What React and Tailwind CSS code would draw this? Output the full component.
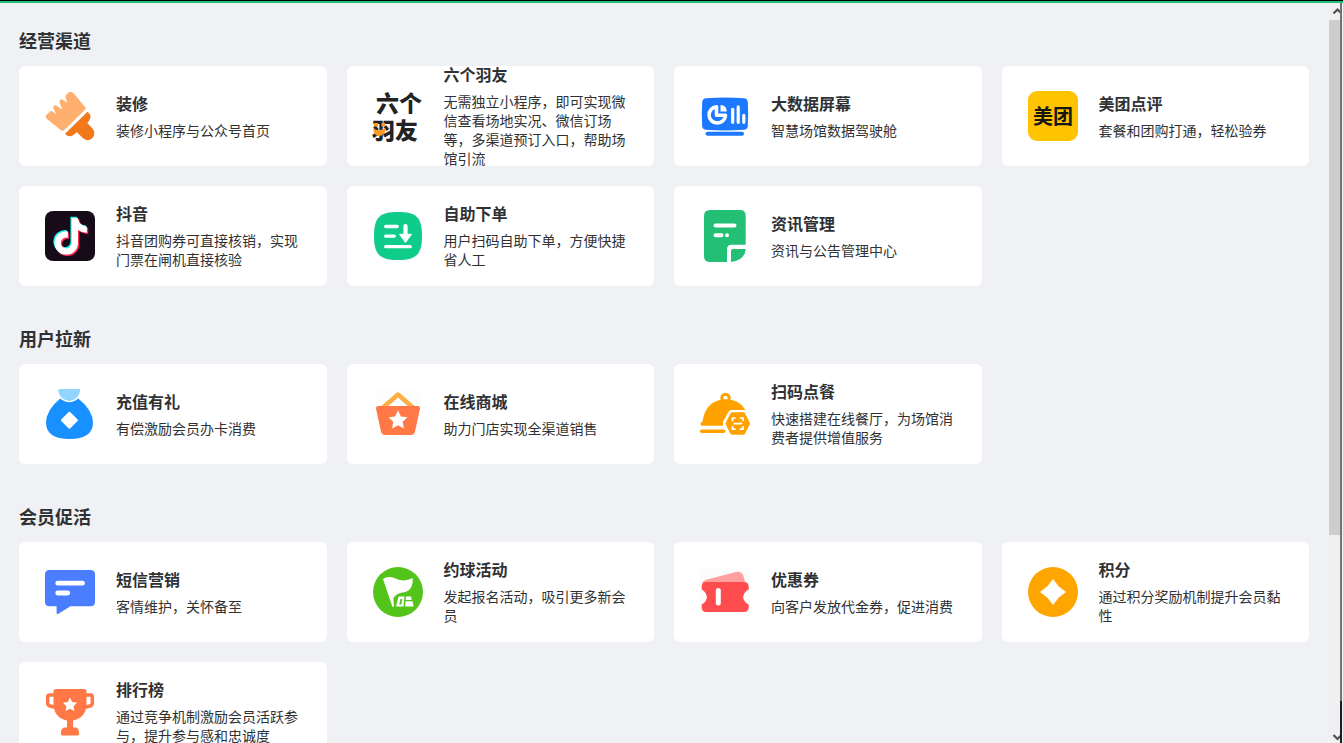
import React from "react";
import { FaTiktok } from "react-icons/fa6";

function Icon({ children }) {
  return (
    <svg viewBox="0 0 50 50" className="size-[50px] shrink-0 overflow-visible" fill="none" aria-hidden="true">
      {children}
    </svg>
  );
}

const STAR = "M0-10 2.9-3.9 9.5-3.1 4.7 1.5 5.9 8.1 0 4.9-5.9 8.1-4.7 1.5-9.5-3.1-2.9-3.9Z";

const BrushIcon = () => (
  <Icon>
    <path
      fill="#FFAF6E"
      d="M16 39.2 2 28Q-.3 25.600 1.200 24.200L5 20.500Q6.500 19.500 8 20.800L11.500 23.800 8.700 18.300Q7.500 16 9 14.800 10.500 13.500 12 15L17.500 18.500 14.800 12.500Q13.800 10.200 15.300 8.800 16.500 7.500 18 9L22.200 11.800 20.700 7Q20 5.500 21 4L23 2Q26-.8 28.600 2.300L40.500 16.500Q41.200 17.500 40.300 18.400L19 39.200Q17.300 40.500 16 39.200Z"
    />
    <path
      fill="#F2781C"
      d="M42.500 20.800Q46 23.500 45.500 27 44.500 29.500 42.300 32L47.500 37.500Q50.500 41.500 48.500 45.500 46.500 49.300 42.500 49.200 39.800 49 37.800 47L31.700 41Q28.500 45 25 45.300 22 45.300 20 42.700Z"
    />
  </Icon>
);

const BrandIcon = () => (
  <Icon>
    <g
      fill="#232323"
      className="font-['Noto_Sans_CJK_SC',sans-serif] font-black"
      fontSize="23"
    >
      <text x="3" y="21">六个</text>
      <text x="-1" y="48">羽友</text>
    </g>
    <path fill="#FF9A23" d="M0 37.500Q6 41 12.500 37Q12.500 45 5 45 1 44.500 0 37.500ZM1 32h4v3.500H1zM8.500 32h3.500v3.500H8.500z" />
  </Icon>
);

const ScreenIcon = () => (
  <Icon>
    <path fill="#1B78FF" d="M6 7.200Q25 5.600 44 7.200 47.400 7.500 47.800 11 48.600 23 47.800 35.500 47.400 38.500 44 38.800 25 40 6 38.800 2.600 38.500 2.200 35.500 1.400 23 2.200 11 2.600 7.500 6 7.200Z" />
    <path stroke="#1B78FF" strokeWidth="4" strokeLinecap="round" d="M7.500 42.800h34.500" />
    <path stroke="#fff" strokeWidth="3.600" strokeLinejoin="round" d="M16.500 15.700v8.500h9a8.200 8.200 0 1 1-9-8.500Z" />
    <path fill="#fff" d="M20.500 14v6.500h6.300Q26.500 14.300 20.500 14Z" />
    <path stroke="#fff" strokeWidth="3.200" strokeLinecap="round" d="M32.700 18.300v13M38.200 15.800v15.500M43.800 24.300v7" />
  </Icon>
);

const MeituanIcon = () => (
  <Icon>
    <rect width="50" height="50" rx="9" fill="#FFC300" />
    <text
      x="25"
      y="32.500"
      textAnchor="middle"
      fontSize="20"
      fill="#151515"
      className="font-['Noto_Sans_CJK_SC',sans-serif] font-bold"
    >
      美团
    </text>
  </Icon>
);

const DouyinIcon = () => (
  <Icon>
    <rect width="50" height="50" rx="8" fill="#170B1A" />
    <FaTiktok x="6" y="5.500" size={37} color="#25F4EE" />
    <FaTiktok x="8.500" y="8" size={37} color="#FE2C55" />
    <FaTiktok x="7.200" y="6.700" size={37} color="#fff" />
  </Icon>
);

const OrderIcon = () => (
  <Icon>
    <path fill="#10CC8B" d="M25 1C43 1 49 6 49 25S43 49 25 49 1 44 1 25 7 1 25 1Z" />
    <path stroke="#fff" strokeWidth="3.300" strokeLinecap="round" d="M12.700 15.500h11.500M12.700 25.200h8.500M12.700 35.700h24.500" />
    <path stroke="#fff" strokeWidth="4.200" strokeLinecap="round" d="M32.500 15v10" />
    <path fill="#fff" stroke="#fff" strokeWidth="1" strokeLinejoin="round" d="M26.500 23.300h12L32.500 31.500Z" />
  </Icon>
);

const NewsIcon = () => (
  <Icon>
    <path fill="#22BF75" d="M10-1h30q5.700 0 5.700 5.700v29H31.500q-4.500 0-4.500 4.500V51H10q-6 0-6-6V5q0-6 6-6Z" />
    <path fill="#22BF75" d="M31 40q0-2 2-2h12.700Q45 49 31 51Z" />
    <path stroke="#fff" strokeWidth="4" strokeLinecap="round" d="M15.500 14.400h19M15.500 24.200h6M27 24.200h.010" />
  </Icon>
);

const BagIcon = () => (
  <Icon>
    <path fill="#91D5FF" d="M15 0h18.500Q36 .2 35 2.500 34 6.500 31.500 9 24.300 15 17 9 14.500 6.500 13.300 2.500 12.800.2 15 0Z" />
    <path fill="#1890FF" d="M15.300 9.500Q24.300 17 33.200 9.500 48 21 48 34 47.500 50 24.500 50T1 34Q1 21 15.300 9.500Z" />
    <path fill="#fff" stroke="#fff" strokeWidth="2" strokeLinejoin="round" d="m24.400 23.800 7.500 7.500-7.500 7.500-7.500-7.500Z" />
  </Icon>
);

const ShopIcon = () => (
  <Icon>
    <rect width="47" height="47" x="1.500" y="1" fill="#FDFDFD" />
    <path stroke="#FFAE45" strokeWidth="4.500" strokeLinejoin="round" d="M9.500 19 25 5.500 40.500 19" />
    <path fill="#FF7846" d="M5 17h40q2.300.3 2 2.500L42 42.500Q41 46 37.500 46h-25Q9 46 8 42.500L3 19.500Q2.700 17.300 5 17Z" />
    <path fill="#fff" d={STAR} transform="translate(25 31.300)" />
  </Icon>
);

const DiningIcon = () => (
  <Icon>
    <circle cx="25.500" cy="9" r="3.700" stroke="#FFA200" strokeWidth="3" />
    <path fill="#FFA200" d="M2.500 32.500Q5.500 11 25.500 10.200 40 10.500 45.500 21H31.500Q29.500 21 28.500 22.800L23 32.500V36.700H1.500Q-1 34.500 2.500 32.500Z" />
    <path stroke="#FFA200" strokeWidth="3.500" strokeLinecap="round" d="M1.700 42.300h22" />
    <path fill="#FFA200" stroke="#FFA200" strokeWidth="3" strokeLinejoin="round" d="M32 24.800h11.500l5 9.700-5 9.700h-11.500l-5-9.700Z" />
    <path stroke="#fff" strokeWidth="1.700" strokeLinecap="round" d="M35 29h-2.500v2.500M40.500 29h2.500v2.500M35 40.200h-2.500v-2.500M40.500 40.200h2.500v-2.500M34 34.600h7.500" />
  </Icon>
);

const SmsIcon = () => (
  <Icon>
    <path fill="#4A7DFF" d="M4.500 3h41Q50 3 50 7.500v27.300q0 4.500-4.500 4.500H25.500L13 47Q11.700 47.500 11.600 46V39.300H4.500Q0 39.300 0 34.800V7.500Q0 3 4.500 3Z" />
    <path stroke="#fff" strokeWidth="4.800" strokeLinecap="round" d="M12.700 16.200h24.800M12.700 26h10" />
  </Icon>
);

const FlagIcon = () => (
  <Icon>
    <circle cx="25" cy="25" r="25" fill="#52C41A" />
    <path fill="#fff" d="M10 12Q15 8.500 22.500 11.500 31 15.500 39.700 11 40.500 22.500 32.500 25 23 25.800 20.300 31.500L21 39.700H19.400Z" />
    <path fill="#fff" fillRule="evenodd" d="M25.500 29.500h6L30.500 39.500H23ZM27.500 32l-1.300 5.500h2.200L29.200 32Z" />
    <path fill="#fff" d="M33 29.500h5l.7 3.500H32.700ZM32.500 34.300h7l1.200 5.200h-8.500Z" />
  </Icon>
);

const CouponIcon = () => (
  <Icon>
    <rect width="50" height="50" fill="#FCFCFC" />
    <path fill="#FFA09E" d="M2 16.500Q3 13.500 6 12.700L36 5Q41 4 43 7.500L45.500 16.500Z" />
    <path fill="#FF4D4F" d="M6 15H44Q48.700 15 48.700 20V22.500Q44 24.500 43 30 44 35.500 48.700 37.500V40Q48.700 45 44 45H6Q1.700 45 1.700 40V37.500Q6 35.500 7 30 6 24.500 1.700 22.500V20Q1.700 15 6 15Z" />
    <path stroke="#fff" strokeWidth="5" strokeLinecap="round" d="M18.300 23.500v12.500" />
  </Icon>
);

const PointsIcon = () => (
  <Icon>
    <circle cx="25" cy="25" r="25" fill="#FFA500" />
    <path fill="#fff" stroke="#fff" strokeWidth="1" strokeLinejoin="round" d="M25 12.500Q29.500 20.500 37.500 25 29.500 29.500 25 37.500 20.500 29.500 12.500 25 20.500 20.500 25 12.500Z" />
  </Icon>
);

const TrophyIcon = () => (
  <Icon>
    <path stroke="#FF7846" strokeWidth="3.500" strokeLinejoin="round" d="M10 8H4.500Q2.700 8 2.700 10V16.500Q3 18.500 5 19L11 20.500M40 8h5.500Q47.300 8 47.300 10V16.500Q47 18.500 45 19L39 20.500" />
    <path fill="#FF7846" d="M11 2H39Q41.500 2 41.500 4.500V18Q40.500 31 28 33.500V41H22V33.500Q9.500 31 8.500 18V4.500Q8.500 2 11 2Z" />
    <path fill="#FF7846" d="M19 40.500h12q2.500.5 3 4.500.5 3.500-1.500 3.500h-15q-2 0-1.500-3.500.5-4 3-4.500Z" />
    <path fill="#fff" d={STAR} transform="translate(25 18) scale(.75)" />
  </Icon>
);

const SECTIONS = [
  {
    title: "经营渠道",
    items: [
      { icon: BrushIcon, name: "装修", text: "装修小程序与公众号首页" },
      { icon: BrandIcon, name: "六个羽友", text: "无需独立小程序，即可实现微信查看场地实况、微信订场等，多渠道预订入口，帮助场馆引流" },
      { icon: ScreenIcon, name: "大数据屏幕", text: "智慧场馆数据驾驶舱" },
      { icon: MeituanIcon, name: "美团点评", text: "套餐和团购打通，轻松验券" },
      { icon: DouyinIcon, name: "抖音", text: "抖音团购券可直接核销，实现门票在闸机直接核验" },
      { icon: OrderIcon, name: "自助下单", text: "用户扫码自助下单，方便快捷省人工" },
      { icon: NewsIcon, name: "资讯管理", text: "资讯与公告管理中心" },
    ],
  },
  {
    title: "用户拉新",
    items: [
      { icon: BagIcon, name: "充值有礼", text: "有偿激励会员办卡消费" },
      { icon: ShopIcon, name: "在线商城", text: "助力门店实现全渠道销售" },
      { icon: DiningIcon, name: "扫码点餐", text: "快速搭建在线餐厅，为场馆消费者提供增值服务" },
    ],
  },
  {
    title: "会员促活",
    items: [
      { icon: SmsIcon, name: "短信营销", text: "客情维护，关怀备至" },
      { icon: FlagIcon, name: "约球活动", text: "发起报名活动，吸引更多新会员" },
      { icon: CouponIcon, name: "优惠券", text: "向客户发放代金券，促进消费" },
      { icon: PointsIcon, name: "积分", text: "通过积分奖励机制提升会员黏性" },
      { icon: TrophyIcon, name: "排行榜", text: "通过竞争机制激励会员活跃参与，提升参与感和忠诚度" },
    ],
  },
];

function Card({ icon: Glyph, name, text }) {
  return (
    <a href="#" className="flex h-[100px] items-center gap-[21px] rounded-md bg-white px-[26px]">
      <Glyph />
      <div className="min-w-0 flex-1 pb-0.5">
        <h3 className="mb-1.5 text-base leading-6 font-bold">{name}</h3>
        <p className="text-sm leading-[19px]">{text}</p>
      </div>
    </a>
  );
}

function Arrow({ up }) {
  return (
    <svg viewBox="0 0 11 17" className="h-[17px] w-full shrink-0" fill="none" aria-hidden="true">
      <path stroke="#505050" strokeWidth="2.200" d={up ? "M4.500 10.500 8.500 6.500l4 4" : "M4.500 9l4 4 4-4"} />
    </svg>
  );
}

export default function App() {
  return (
    <div className="flex h-screen flex-col overflow-hidden bg-[#F0F1F5] font-['Noto_Sans_CJK_SC',sans-serif] text-[#303133]">
      <div className="h-[3px] shrink-0 border-t border-black bg-[#22BF75]" />
      <div className="flex min-h-0 flex-1">
        <main className="flex min-w-0 flex-1 flex-col gap-10 overflow-y-auto pt-[25px] pr-5 pb-5 pl-[19px] [scrollbar-width:none]">
          {SECTIONS.map((section) => (
            <section key={section.title}>
              <h2 className="mb-3.5 text-lg leading-6 font-bold">{section.title}</h2>
              <div className="grid grid-cols-4 gap-5">
                {section.items.map((item) => (
                  <Card key={item.name} {...item} />
                ))}
              </div>
            </section>
          ))}
        </main>
        <div className="flex w-[11px] shrink-0 flex-col bg-[#F0F0F0]">
          <Arrow up />
          <div className="flex min-h-0 flex-1 flex-col">
            <div className="h-[73%] bg-[#CDCDCD]" />
          </div>
          <Arrow />
        </div>
        <div className="mr-px flex w-0.5 shrink-0 flex-col bg-[#737373]">
          <div className="mt-auto h-[42px] bg-[#1C1D22]" />
        </div>
      </div>
    </div>
  );
}
